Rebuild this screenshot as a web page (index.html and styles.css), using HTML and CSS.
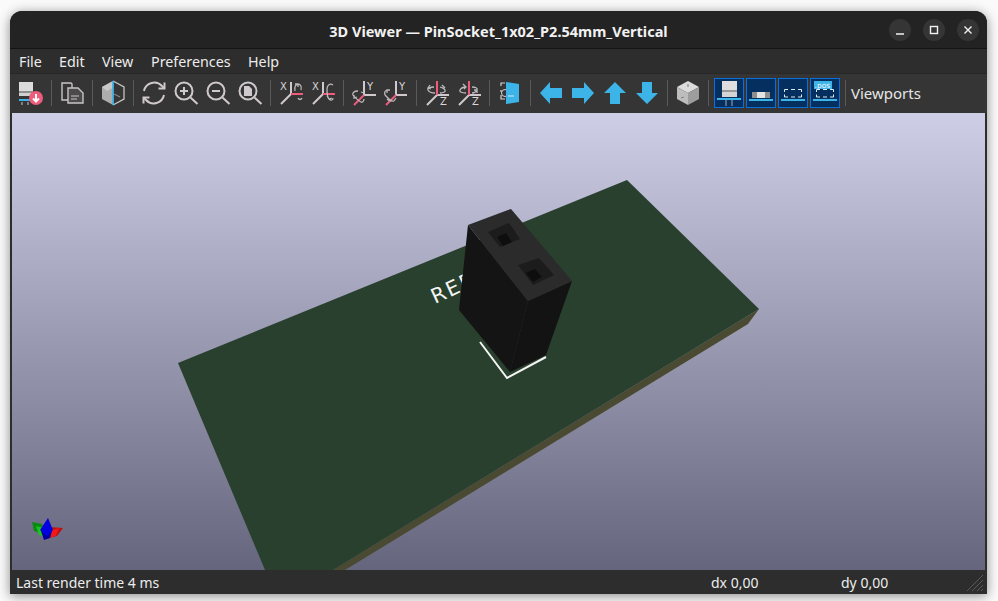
FILE: index.html
```html
<!DOCTYPE html>
<html lang="en">
<head>
<meta charset="utf-8">
<title>3D Viewer — PinSocket_1x02_P2.54mm_Vertical</title>
<link rel="stylesheet" href="styles.css">
</head>
<body>
<div class="window">
  <header class="titlebar">
    <div class="title">3D Viewer — PinSocket_1x02_P2.54mm_Vertical</div>
    <div class="controls">
      <span class="ctl"><svg width="22" height="22" viewBox="0 0 22 22"><path class="w" d="M7 15h8"/></svg></span>
      <span class="ctl"><svg width="22" height="22" viewBox="0 0 22 22"><rect class="w" x="7.5" y="7.5" width="7" height="7"/></svg></span>
      <span class="ctl"><svg width="22" height="22" viewBox="0 0 22 22"><path class="w" d="M7.5 7.5l7 7M14.5 7.5l-7 7"/></svg></span>
    </div>
  </header>
  <nav class="menubar"><span>File</span><span>Edit</span><span>View</span><span>Preferences</span><span>Help</span></nav>
  <div class="toolbar">
    <span class="btn"><svg viewBox="0 0 30 30"><rect x="3" y="4" width="14" height="9" fill="#dcdcdc"/><rect x="3" y="13" width="14" height="2" fill="#8f8f8f"/><rect x="3" y="15" width="14" height="3" fill="#d0d0d0"/><rect x="3" y="21" width="13" height="2" fill="#3db4e8"/><path d="M6 24v3M12 24v3" stroke="#999" stroke-width="1.5"/><circle cx="20" cy="20" r="7" fill="#ef5b7b"/><path d="M20 16v7M17 20.5l3 3 3-3" fill="none" stroke="#fff" stroke-width="2"/></svg></span>
    <i class="sep"></i>
    <span class="btn"><svg viewBox="0 0 30 30"><path d="M11 22H5V5h9l1 1v4" fill="none" stroke="#c9c5c7" stroke-width="1.4"/><path d="M11 10h10l5 5v10H11z" fill="#4b4b4b" stroke="#c9c5c7" stroke-width="1.4"/><path d="M14 18h8M14 21h6" stroke="#c9c5c7" stroke-width="1.2"/></svg></span>
    <i class="sep"></i>
    <span class="btn"><svg viewBox="0 0 30 30"><path d="M15 3L4 9v12l11 6z" fill="#adadad"/><path d="M4 9l11-6v6.500L9 13z" fill="#c8c8c8"/><path d="M15 3l11 6v12l-11 6" fill="none" stroke="#c9c5c7" stroke-width="1.300"/><path d="M16 16l6 3" stroke="#888" stroke-width="1.200"/><path d="M15 3v24" stroke="#3db4e8" stroke-width="1.800"/></svg></span>
    <i class="sep"></i>
    <span class="btn"><svg viewBox="0 0 30 30"><path class="s" d="M5 13a10.500 10.500 0 0 1 18-5l2 2M25 17a10.500 10.500 0 0 1-18 5l-2-2"/><path class="s" d="M25.500 4.500v6h-6M4.500 25.500v-6h6"/></svg></span>
    <span class="btn"><svg viewBox="0 0 30 30"><circle class="s" cx="13" cy="13" r="8.500"/><path class="s" d="M19.500 19.500l7 6.500M13 9v8M9 13h8"/></svg></span>
    <span class="btn"><svg viewBox="0 0 30 30"><circle class="s" cx="13" cy="13" r="8.500"/><path class="s" d="M19.500 19.500l7 6.500M9 13h8"/></svg></span>
    <span class="btn"><svg viewBox="0 0 30 30"><circle class="s" cx="13" cy="13" r="8.500"/><path class="s" d="M19.500 19.500l7 6.500"/><path d="M9 8h5l3 3v7H9z" fill="#cfc8cc"/></svg></span>
    <i class="sep"></i>
    <span class="btn"><svg viewBox="0 0 30 30"><text class="ax" x="4" y="12">X</text><path class="t" d="M15 4v12L5 26"/><path class="r" d="M15 16h12"/><path class="t1" d="M19 13c-1-4 1-7 3-7s4 2 3 6M19 6l3 0 0 3M22 20c1 2 3 2 4 0"/></svg></span>
    <span class="btn"><svg viewBox="0 0 30 30"><text class="ax" x="4" y="12">X</text><path class="t" d="M15 4v12L5 26"/><path class="r" d="M15 16h12"/><path class="t1" d="M25 7c-3-2-6 0-6 4s0 8 2 10 4 1 4-1M19 18l2 3 3-1"/></svg></span>
    <i class="sep"></i>
    <span class="btn"><svg viewBox="0 0 30 30"><text class="ax" x="18" y="12">Y</text><path class="t" d="M15 3v14h12"/><path class="r" d="M15 17L5 27"/><path class="t1" d="M9 13c-4 0-6 2-5 4s6 6 8 7 3-2 3-3M5 17l0 3 3-1M12 14l3 1"/></svg></span>
    <span class="btn"><svg viewBox="0 0 30 30"><text class="ax" x="18" y="12">Y</text><path class="t" d="M15 3v14h11"/><path class="r" d="M15 17L5 27"/><path class="t1" d="M6 12c-3 1-3 4-1 6s5 6 8 5M9 12l-3 0 0 3M13 23l2-3M6 21c2 2 4 2 5 1"/></svg></span>
    <i class="sep"></i>
    <span class="btn"><svg viewBox="0 0 30 30"><text class="ax" x="18" y="27">Z</text><path class="t" d="M27 17H15L5 27"/><path class="r" d="M15 3v14"/><path class="t1" d="M12 9c-4 0-7 1-6 3s3 3 7 3M18 15c3 0 6-1 5-3s-2-2-5-3M8 7l-2 3 3 1M20 7l3 3"/></svg></span>
    <span class="btn"><svg viewBox="0 0 30 30"><text class="ax" x="18" y="27">Z</text><path class="t" d="M27 17H15L5 27"/><path class="r" d="M15 3v14"/><path class="t1" d="M12 15c-4 0-7-1-6-3s3-3 6-3M18 9c3 0 6 1 5 3s-3 3-5 3M9 6l3 3-2 2M20 12l3 0 0 3"/></svg></span>
    <i class="sep"></i>
    <span class="btn"><svg viewBox="0 0 30 30"><path d="M10 5H6v3M6 17v4h4M6 12v2" fill="none" stroke="#d6d2d4" stroke-width="1.200"/><circle cx="10" cy="15" r="3.500" fill="none" stroke="#d6d2d4" stroke-width="1"/><path d="M11 4l13 2v18l-13 2z" fill="#3db4e8"/><path d="M13 18h6" stroke="#cfe9f5" stroke-width="1.200"/></svg></span>
    <i class="sep"></i>
    <span class="btn"><svg viewBox="0 0 30 30"><path class="ar" d="M4 15l10-11v6h12v10H14v6z"/></svg></span>
    <span class="btn"><svg viewBox="0 0 30 30"><path class="ar" d="M26 15L16 4v6H4v10h12v6z"/></svg></span>
    <span class="btn"><svg viewBox="0 0 30 30"><path class="ar" d="M15 4L4 15h6v11h10V15h6z"/></svg></span>
    <span class="btn"><svg viewBox="0 0 30 30"><path class="ar" d="M15 26L4 15h6V4h10v11h6z"/></svg></span>
    <i class="sep"></i>
    <span class="btn"><svg viewBox="0 0 30 30"><path d="M15 3L4 9l11 6 11-6z" fill="#dcdcdc"/><path d="M4 9v12l11 6V15z" fill="#bdbdbd"/><path d="M26 9v12l-11 6V15z" fill="#9d9d9d"/><path d="M15 6v3M8 20l3-1" stroke="#888" stroke-width="1.200"/></svg></span>
    <i class="sep"></i>
    <span class="btn on"><svg viewBox="0 0 28 28"><rect x="7" y="2" width="15" height="10" fill="#dedede"/><rect x="7" y="11" width="15" height="2" fill="#999"/><rect x="7" y="13" width="15" height="5" fill="#d4d4d4"/><rect x="2" y="19" width="24" height="2" fill="#3db4e8"/><path d="M11 21v6M17 21v6" stroke="#8a8f99" stroke-width="1.300"/></svg></span>
    <span class="btn on"><svg viewBox="0 0 28 28"><rect x="5" y="13" width="18" height="6" fill="#e4e4e4"/><rect x="5" y="13" width="5" height="6" fill="#8f8f8f"/><rect x="18" y="13" width="5" height="6" fill="#8f8f8f"/><rect x="2" y="20" width="24" height="2" fill="#3db4e8"/></svg></span>
    <span class="btn on"><svg viewBox="0 0 28 28"><path class="dash" d="M5.500 13v-2.500H9M12 10.500h4M19 10.500h3.500V13M5.500 15.500V18H9M12 18h4M19 18h3.500v-2.500"/><rect x="2" y="20" width="24" height="2" fill="#3db4e8"/></svg></span>
    <span class="btn on"><svg viewBox="0 0 28 28"><path class="dash" d="M5.500 13v-2.500H9M12 10.500h4M19 10.500h3.500V13M5.500 15.500V18H9M12 18h4M19 18h3.500v-2.500"/><rect x="2" y="20" width="24" height="2" fill="#3db4e8"/><rect x="3" y="2" width="18" height="8" fill="#3db4e8"/><text class="pos" x="3.500" y="8.500">.pos</text></svg></span>
    <i class="sep"></i>
    <span class="tool-label">Viewports</span>
  </div>
  <main class="canvas">
    <svg class="scene" viewBox="12 113 973 457" role="img" aria-label="3D view of a pin socket on a green board">
      <polygon fill="#4a4932" points="759,309 748,324 345,570 333,570"/>
      <polygon fill="#28402d" points="627,180 759,309 333,570 265,570 178,363"/>
      <text class="ref" transform="translate(435 304) rotate(-25)">REF**</text>
      <polyline class="silk" points="480,342 507,378 546,357"/>
      <polygon fill="#141414" points="468,225 528,301 510,372 459,310"/>
      <polygon fill="#131313" points="528,301 572,281 546,355 510,372"/>
      <polygon fill="#2b2b2b" points="468,225 511,209 572,281 528,301"/>
      <polygon fill="#1c1c1c" points="488,232 509,223 520,239 500,247"/>
      <polygon fill="#0e0e0e" points="497,237 506,233 512,242 503,246"/>
      <polygon fill="#1c1c1c" points="518,265 539,258 554,275 533,285"/>
      <polygon fill="#0e0e0e" points="526,273 535,269 542,277 533,282"/>
      <polygon fill="#0a8a12" points="32,522 42,524 44,534 34,531"/>
      <polygon fill="#19c41f" points="36,526 44,528 47,538 39,535"/>
      <polygon fill="#c01010" points="49,527 63,528 57,536 48,538"/>
      <polygon fill="#f01818" points="49,531 59,528 56,536 46,539"/>
      <polygon fill="#0000a0" points="41,531 52,531 50,538 44,540"/>
      <polygon fill="#0000e0" points="48,518 53,530 47,536 40,530"/>
    </svg>
  </main>
  <footer class="statusbar">
    <span class="st-main">Last render time 4 ms</span>
    <span class="st-dx">dx 0,00</span>
    <span class="st-dy">dy 0,00</span>
    <svg class="grip" width="18" height="18" viewBox="0 0 18 18"><path d="M1 17L17 1M6 17L17 6M11 17l6-6M15 17l2-2" stroke="#5a5a5a" fill="none"/></svg>
  </footer>
</div>
</body>
</html>
```
FILE: styles.css
```css
* { box-sizing: border-box; }
html, body { height: 100%; }
body {
  margin: 0;
  padding: 11px 0 0 10px;
  background: #fafafa;
  overflow: hidden;
  font-family: "Noto Sans", "Open Sans", sans-serif;
  color: #ececec;
}
.window {
  width: 977px;
  height: 583px;
  display: flex;
  flex-direction: column;
  background: #2d2d2d;
  border-radius: 12px 12px 0 0;
  box-shadow: 0 2px 12px rgba(0, 0, 0, .45);
  overflow: hidden;
}
.titlebar {
  height: 38px;
  flex: none;
  background: #232323;
  border-bottom: 1px solid #141414;
  display: flex;
  align-items: center;
  justify-content: center;
  position: relative;
}
.title {
  font-size: 14.500px;
  font-weight: 700;
  color: #f2f2f2;
  margin-top: 2px;
}
.controls {
  position: absolute;
  right: 8px;
  top: 8px;
  display: flex;
  gap: 12px;
}
.ctl {
  width: 22px;
  height: 22px;
  border-radius: 50%;
  background: #353535;
  display: block;
}
.ctl svg { display: block; }
.w { fill: none; stroke: #f2f2f2; stroke-width: 1.400; }
.menubar {
  height: 25px;
  flex: none;
  background: #2d2d2d;
  display: flex;
  align-items: center;
  padding: 0 0 0 9px;
  font-size: 14.300px;
  border-bottom: 1px solid #272727;
}
.menubar span:nth-child(1) { width: 40px; }
.menubar span:nth-child(2) { width: 43px; }
.menubar span:nth-child(3) { width: 49px; }
.menubar span:nth-child(4) { width: 97px; }
.toolbar {
  height: 39px;
  flex: none;
  background: #353535;
  display: flex;
  align-items: flex-start;
  gap: 2px;
  padding: 4px 0 5px 6px;
}
.btn {
  width: 30px;
  height: 30px;
  flex: none;
  display: block;
}
.btn svg { display: block; width: 30px; height: 30px; }
.btn.on {
  border: 1px solid #0b6fd6;
  background: #052f5e;
}
.btn.on svg { width: 28px; height: 28px; }
.sep {
  width: 7px;
  height: 26px;
  margin-top: 2px;
  flex: none;
  display: block;
  background: linear-gradient(#5a5a5a, #5a5a5a) center / 1px 100% no-repeat;
}
.tool-label { font-size: 15px; line-height: 30px; color: #e6e6e6; }
.s { fill: none; stroke: #cfc8cc; stroke-width: 2; }
.t { fill: none; stroke: #cfc8cc; stroke-width: 2; }
.t1 { fill: none; stroke: #bdb8ba; stroke-width: 1.300; }
.r { fill: none; stroke: #ef5b7b; stroke-width: 2; }
.ax { font: 400 10px "DejaVu Sans", sans-serif; fill: #dcd6d9; }
.ar { fill: #3db4e8; }
.dash { fill: none; stroke: #dfe8f0; stroke-width: 1; }
.pos { font: 400 7.500px "DejaVu Sans", sans-serif; fill: #f0f8fd; }
.canvas {
  height: 457px;
  flex: none;
  margin: 0 2px;
  background: linear-gradient(#cecee7, #65657d);
}
.scene { display: block; width: 973px; height: 457px; }
.ref { font: 400 20.500px "DejaVu Sans", sans-serif; letter-spacing: 2px; fill: #f4f4f4; }
.silk { fill: none; stroke: #f4f4f4; stroke-width: 2; }
.statusbar {
  height: 24px;
  flex: 1;
  display: flex;
  align-items: center;
  font-size: 14px;
  position: relative;
  padding-left: 6px;
}
.st-main { width: 695px; }
.st-dx { width: 130px; }
.grip { position: absolute; right: 3px; bottom: 2px; }
```
